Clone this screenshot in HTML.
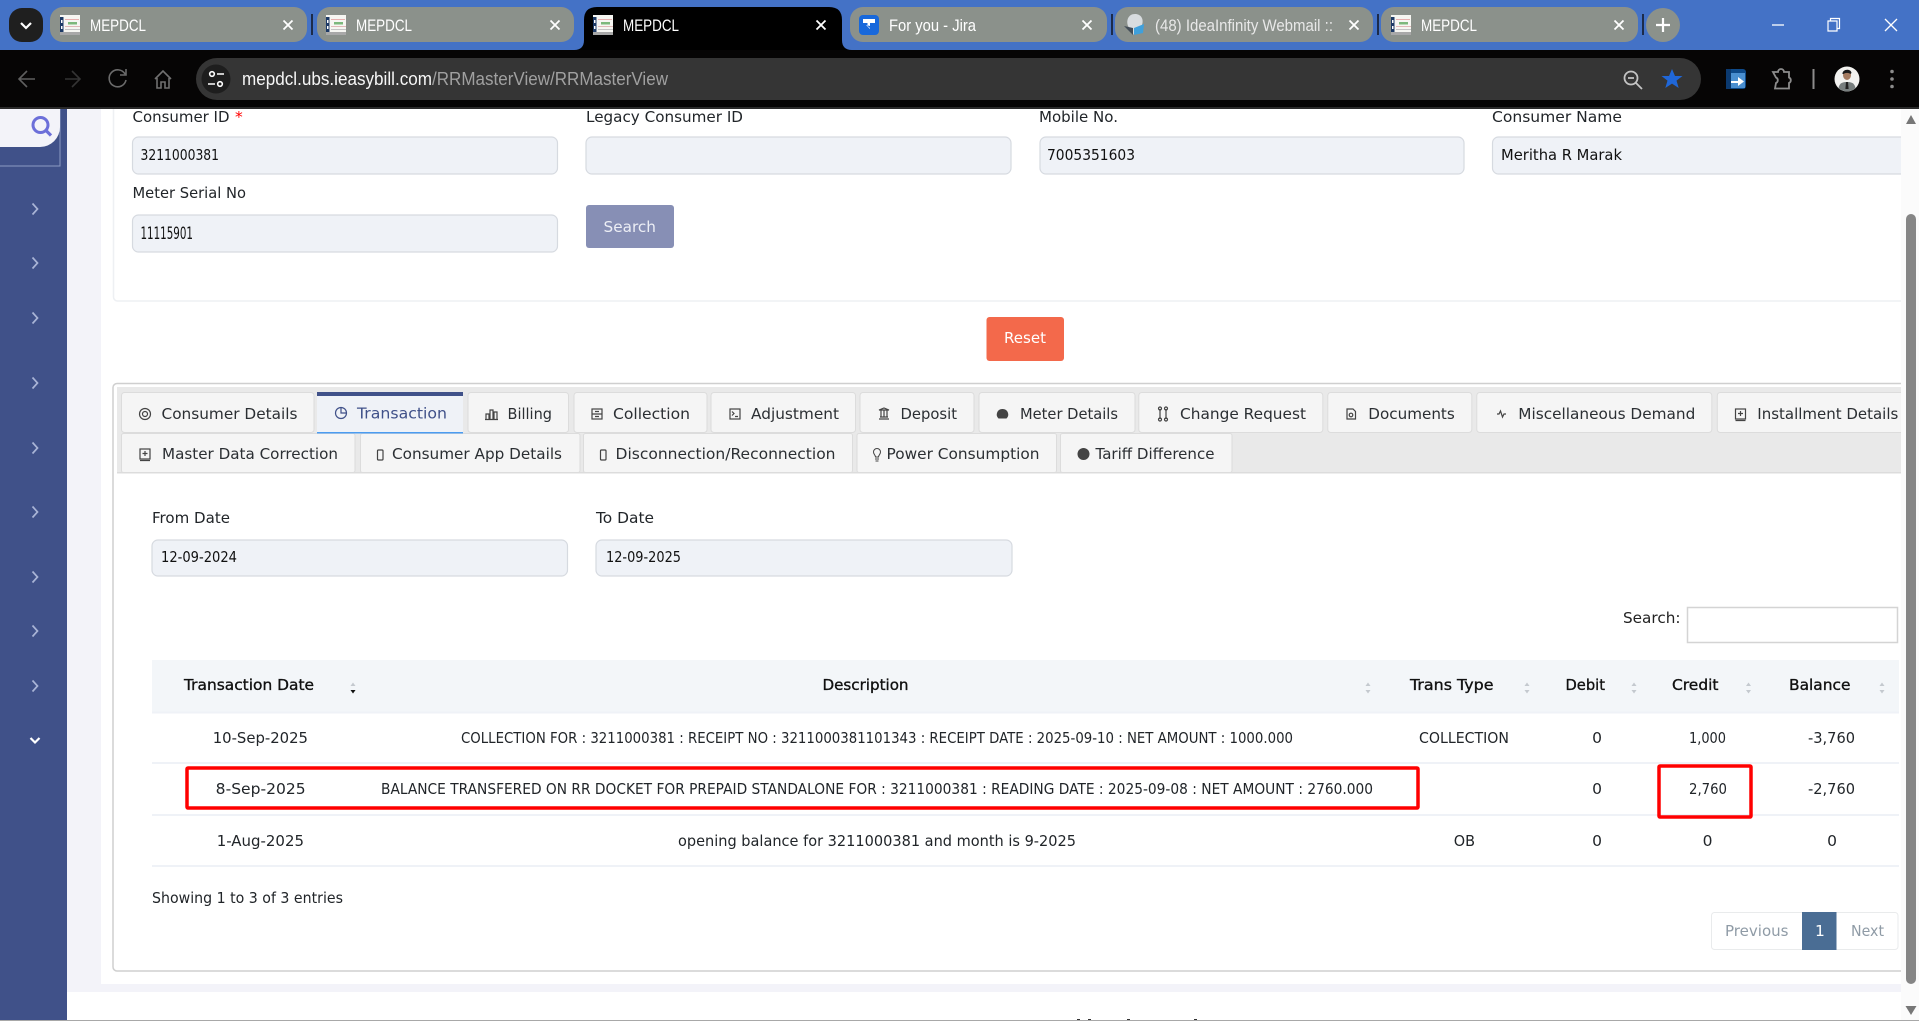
<!DOCTYPE html>
<html lang="en"><head><meta charset="utf-8"><title>MEPDCL</title>
<style>
html,body{margin:0;padding:0;background:#fff;width:1919px;height:1021px;overflow:hidden}
svg{display:block}
text{font-family:"DejaVu Sans","Liberation Sans",sans-serif;font-size:15.5px;fill:#212529}
.c text{font-family:"Liberation Sans",sans-serif;font-size:16.5px;fill:#fff}
.h text{fill:#111;font-size:15.5px;stroke:#111;stroke-width:.35px}
.tab{fill:#f5f5f5;stroke:#dcdcdc;stroke-width:1}
.tt text{fill:#2b2f33;font-size:15.5px}
.ic{fill:none;stroke:#444;stroke-width:1.2}
.lab text{fill:#212529;font-size:15.5px}
.inp{fill:#eff2f7;stroke:#d6dae0;stroke-width:1.2}
.rl{fill:#eff2f7}
</style></head><body>
<svg xmlns="http://www.w3.org/2000/svg" width="1919" height="1021" viewBox="0 0 1919 1021">
<defs>
<g id="fav"><rect width="20" height="20" fill="#f6f6f2"/><rect x="0" y="2" width="3.500" height="15" fill="#1d3a66"/><rect x="1" y="5" width="1.500" height="3" fill="#fff"/><rect x="1" y="11" width="1.500" height="3" fill="#fff"/><rect x="5" y="4" width="14" height="1" fill="#e7b0b0"/><rect x="8" y="7" width="9" height="2.500" fill="#7cb87c"/><rect x="5" y="11" width="15" height="1" fill="#e0b8b8"/><rect x="5" y="14" width="15" height="1" fill="#c4c4c4"/><rect x="0" y="17" width="20" height="3" fill="#a8a8a8"/></g>
<g id="x"><path d="M-4.500-4.500 4.500 4.500M4.500-4.500-4.500 4.500" stroke="#fff" stroke-width="1.800" fill="none"/></g>
<g id="sort"><path d="M-2.500-3 0-6.500 2.500-3z" fill="#c4c9cf"/><path d="M-2.500 1 0 4.500 2.500 1z" fill="#c4c9cf"/></g>
<g id="chev"><path d="M-2.500-5.500 2.500 0-2.500 5.500" fill="none" stroke="#a9b4d6" stroke-width="1.700"/></g>
</defs>

<!-- Browser tab strip -->
<rect width="1919" height="50" fill="#4472c6"/>
<rect y="50" width="1919" height="57" fill="#060505"/>
<rect y="107" width="1919" height="2" fill="#2a2a2a"/>
<rect x="9" y="8" width="34" height="34" rx="13" fill="#1f1f1f"/>
<path d="M21 23l5 5 5-5" fill="none" stroke="#fff" stroke-width="2.200"/>
<g fill="#8b918b">
<rect x="50" y="7" width="257" height="35" rx="13"/>
<rect x="317" y="7" width="257" height="35" rx="13"/>
<rect x="850" y="7" width="257" height="35" rx="13"/>
<rect x="1115" y="7" width="258" height="35" rx="13"/>
<rect x="1381" y="7" width="257" height="35" rx="13"/>
<circle cx="1663" cy="25" r="17"/>
</g>
<path d="M574 50q10 0 10-10V20q0-13 13-13h232q13 0 13 13v20q0 10 10 10z" fill="#000"/>
<g fill="#1c2b4a"><rect x="311" y="14" width="2" height="21"/><rect x="1111" y="14" width="2" height="21"/><rect x="1377" y="14" width="2" height="21"/><rect x="1642" y="14" width="2" height="21"/></g>
<use href="#fav" x="60" y="15"/><use href="#fav" x="326" y="15"/><use href="#fav" x="593" y="15"/><use href="#fav" x="1391" y="15"/>
<rect x="859" y="15" width="20" height="20" rx="4" fill="#1868db"/>
<path d="M863 19h12v4h-5v5l-2.500-2v-3H863z M866 25l4 4v-3z" fill="#fff"/>
<path d="M1135 14c-7 0-9 7-7 12l6 9 8-10c2-6-1-11-7-11z" fill="#d8dcdf"/>
<path d="M1124 26l9 9v-7z" fill="#444e58"/><path d="M1144 24l-10 4v7l9-2z" fill="#3fa0dc"/>
<g class="c">
<text x="90" y="31" textLength="56" lengthAdjust="spacingAndGlyphs">MEPDCL</text>
<text x="356" y="31" textLength="56" lengthAdjust="spacingAndGlyphs">MEPDCL</text>
<text x="623" y="31" textLength="56" lengthAdjust="spacingAndGlyphs">MEPDCL</text>
<text x="889" y="31" textLength="87" lengthAdjust="spacingAndGlyphs">For you - Jira</text>
<text x="1155" y="31" textLength="178" lengthAdjust="spacingAndGlyphs" style="fill:#e8e8e8">(48) IdeaInfinity Webmail ::</text>
<text x="1421" y="31" textLength="56" lengthAdjust="spacingAndGlyphs">MEPDCL</text>
</g>
<use href="#x" x="288" y="25"/><use href="#x" x="555" y="25"/><use href="#x" x="821" y="25"/><use href="#x" x="1087" y="25"/><use href="#x" x="1354" y="25"/><use href="#x" x="1619" y="25"/>
<path d="M1663 18v14M1656 25h14" stroke="#fff" stroke-width="2.200"/>
<path d="M1772 25h12" stroke="#fff" stroke-width="1.300"/>
<path d="M1828 21h9v10h-9zM1830.500 21v-2.500h9v10H1837" fill="none" stroke="#fff" stroke-width="1.200"/>
<path d="M1885 19l12 12M1897 19l-12 12" stroke="#fff" stroke-width="1.300"/>

<!-- Toolbar -->
<g fill="none" stroke-width="1.600">
<path d="M35 79H20M27 71l-8 8 8 8" stroke="#5f5f5f"/>
<path d="M65 79h15M72 71l8 8-8 8" stroke="#343434"/>
<path d="M125 74a8.500 8.500 0 1 0 1 6M126 69v6h-6" stroke="#6b6b6b"/>
<path d="M155 79l8-8 8 8M157 78v10h4v-6h4v6h4V78" stroke="#707070"/>
</g>
<rect x="196" y="58" width="1505" height="42" rx="21" fill="#353535"/>
<circle cx="216" cy="79" r="14.500" fill="#1e1e1e"/>
<g fill="none" stroke="#fff" stroke-width="1.600"><circle cx="212" cy="74" r="2.300"/><path d="M217 74h7M208 84h7"/><circle cx="220" cy="84" r="2.300"/></g>
<g class="c"><text x="242" y="85" textLength="190" lengthAdjust="spacingAndGlyphs" style="font-size:18px;fill:#f6f6f6">mepdcl.ubs.ieasybill.com</text>
<text x="432" y="85" textLength="236" lengthAdjust="spacingAndGlyphs" style="font-size:18px;fill:#a0a0a0">/RRMasterView/RRMasterView</text></g>
<g fill="none" stroke="#c4c4c4" stroke-width="1.800"><circle cx="1631" cy="78" r="6.500"/><path d="M1636 83l6 6M1628 78h6"/></g>
<path d="M1672 69l3 7h7.500l-6 4.600 2.200 7.400-6.700-4.400-6.700 4.400 2.200-7.400-6-4.600h7.500z" fill="#2067d8"/>
<rect x="1726" y="69" width="20" height="20" rx="3" fill="#0e4a8a"/><rect x="1730" y="73" width="15" height="15" fill="#4a8fd0"/><path d="M1731 81h7v-4l6 4.500-6 4.500v-3h-7z" fill="#fff"/><rect x="1726" y="69" width="5" height="20" fill="#0b3a70"/>
<path d="M1773 72h5a3 3 0 0 1 6 0h5v5.500a3 3 0 0 1 0 5.500v5.500h-14l1-5.500a3 3 0 0 0 0-5.500z" fill="none" stroke="#8c8c8c" stroke-width="1.800"/>
<rect x="1812.500" y="69" width="2" height="20" fill="#8c8c8c"/>
<circle cx="1847" cy="79" r="12.500" fill="#f2f2f0"/>
<path d="M1838.500 88c1-5 4-6 8.500-6s7.500 1 8.500 6a12.500 12.500 0 0 1-17 0z" fill="#777e7e"/>
<path d="M1846 82h2l.6 7h-3.200z" fill="#222"/>
<ellipse cx="1847" cy="75" rx="4" ry="5" fill="#a57b60"/><path d="M1842.500 74c-.5-5 8.500-6 9-1l-1 1c-2-1.500-5-1.500-7 0z" fill="#1b1b1b"/>
<g fill="#8c8c8c"><circle cx="1892" cy="71.500" r="1.800"/><circle cx="1892" cy="79" r="1.800"/><circle cx="1892" cy="86.500" r="1.800"/></g>

<!-- Page background -->
<rect x="67" y="109" width="34" height="883" fill="#f3f3f9"/>
<rect x="67" y="984" width="1834" height="8" fill="#f3f3f9"/>

<!-- Sidebar -->
<rect x="0" y="109" width="67" height="912" fill="#405189"/>
<path d="M60 109v57H0" fill="none" stroke="#8d9bc2" stroke-width="1"/>
<path d="M0 109h60v18a20 20 0 0 1-20 20H0z" fill="#f3f3f9"/>
<circle cx="40.500" cy="125" r="7.500" fill="none" stroke="#6c6fd9" stroke-width="3"/><path d="M45.500 130l5.500 5.500" stroke="#6c6fd9" stroke-width="3.200"/>
<use href="#chev" x="35" y="209"/><use href="#chev" x="35" y="263"/><use href="#chev" x="35" y="318"/><use href="#chev" x="35" y="383"/><use href="#chev" x="35" y="448"/><use href="#chev" x="35" y="512"/><use href="#chev" x="35" y="577"/><use href="#chev" x="35" y="631"/><use href="#chev" x="35" y="686"/>
<path d="M30.500 738l4.500 4.500 4.500-4.500" fill="none" stroke="#fff" stroke-width="2.200"/>

<!-- Search form card -->
<path d="M113.500 109v188a4 4 0 0 0 4 4H1901" fill="none" stroke="#eef0f3" stroke-width="1.500"/>
<g class="lab">
<text x="132.500" y="122" textLength="97" lengthAdjust="spacingAndGlyphs">Consumer ID</text>
<text x="235" y="122" style="fill:#f00">*</text>
<text x="586" y="122" textLength="157" lengthAdjust="spacingAndGlyphs">Legacy Consumer ID</text>
<text x="1039" y="122" textLength="79" lengthAdjust="spacingAndGlyphs">Mobile No.</text>
<text x="1492" y="122" textLength="130" lengthAdjust="spacingAndGlyphs">Consumer Name</text>
<text x="132.500" y="198" textLength="113.500" lengthAdjust="spacingAndGlyphs">Meter Serial No</text>
<text x="152" y="523" textLength="78" lengthAdjust="spacingAndGlyphs">From Date</text>
<text x="596" y="523" textLength="58" lengthAdjust="spacingAndGlyphs">To Date</text>
</g>
<rect class="inp" x="132.500" y="137" width="425" height="37" rx="6"/>
<rect class="inp" x="586" y="137" width="425" height="37" rx="6"/>
<rect class="inp" x="1040" y="137" width="424" height="37" rx="6"/>
<rect class="inp" x="1492.500" y="137" width="430" height="37" rx="6"/>
<rect class="inp" x="132.500" y="215" width="425" height="37" rx="6"/>
<g>
<text x="140.500" y="160" textLength="78.500" lengthAdjust="spacingAndGlyphs" style="fill:#111">3211000381</text>
<text x="1047" y="160" textLength="88" lengthAdjust="spacingAndGlyphs" style="fill:#111">7005351603</text>
<text x="1501" y="160" textLength="121" lengthAdjust="spacingAndGlyphs" style="fill:#111">Meritha R Marak</text>
<text x="140.500" y="239" textLength="52.500" lengthAdjust="spacingAndGlyphs" style="fill:#111;font-size:16.5px">11115901</text>
</g>
<rect x="586" y="205" width="88" height="43" rx="3" fill="#878fb5"/>
<text x="603.500" y="232" textLength="52.500" lengthAdjust="spacingAndGlyphs" style="fill:#eceef5">Search</text>
<rect x="986.500" y="317" width="77.500" height="44" rx="3" fill="#f3694b"/>
<text x="1004" y="343" textLength="42" lengthAdjust="spacingAndGlyphs" style="fill:#fff">Reset</text>

<!-- Tabs card -->
<path d="M1901 383.500H117a4 4 0 0 0-4 4V967a4 4 0 0 0 4 4H1901" fill="none" stroke="#cfcfcf" stroke-width="1.500"/>
<rect x="117" y="387" width="1784" height="86" fill="#e9e9e9"/>
<rect x="117" y="472" width="1784" height="1.500" fill="#dcdcdc"/>
<g>
<rect class="tab" x="121.500" y="392.500" width="192.500" height="40" rx="3"/>
<rect class="tab" x="468" y="392.500" width="100.500" height="40" rx="3"/>
<rect class="tab" x="574" y="392.500" width="133" height="40" rx="3"/>
<rect class="tab" x="711" y="392.500" width="144.500" height="40" rx="3"/>
<rect class="tab" x="860" y="392.500" width="114" height="40" rx="3"/>
<rect class="tab" x="979" y="392.500" width="156" height="40" rx="3"/>
<rect class="tab" x="1138.800" y="392.500" width="184" height="40" rx="3"/>
<rect class="tab" x="1327.800" y="392.500" width="144" height="40" rx="3"/>
<rect class="tab" x="1476.800" y="392.500" width="235" height="40" rx="3"/>
<rect class="tab" x="1717.300" y="392.500" width="190" height="40" rx="3"/>
<rect class="tab" x="121.500" y="433.500" width="233.500" height="39" rx="2"/>
<rect class="tab" x="360.500" y="433.500" width="219.500" height="39" rx="2"/>
<rect class="tab" x="583.500" y="433.500" width="269" height="39" rx="2"/>
<rect class="tab" x="857" y="433.500" width="199.500" height="39" rx="2"/>
<rect class="tab" x="1060.500" y="433.500" width="171.500" height="39" rx="2"/>
</g>
<rect x="317" y="392" width="146" height="41" fill="#eff2f7"/>
<rect x="317" y="392" width="146" height="4" fill="#405189"/>
<rect x="317" y="432" width="146" height="1.500" fill="#4b9cf0"/>
<g class="tt">
<text x="161.500" y="419" textLength="136" lengthAdjust="spacingAndGlyphs">Consumer Details</text>
<text x="357" y="418.500" textLength="90" lengthAdjust="spacingAndGlyphs" style="fill:#405189">Transaction</text>
<text x="507.500" y="419" textLength="44.500" lengthAdjust="spacingAndGlyphs">Billing</text>
<text x="613" y="419" textLength="77" lengthAdjust="spacingAndGlyphs">Collection</text>
<text x="751" y="419" textLength="88" lengthAdjust="spacingAndGlyphs">Adjustment</text>
<text x="900.500" y="419" textLength="56.500" lengthAdjust="spacingAndGlyphs">Deposit</text>
<text x="1020" y="419" textLength="98" lengthAdjust="spacingAndGlyphs">Meter Details</text>
<text x="1180" y="419" textLength="126" lengthAdjust="spacingAndGlyphs">Change Request</text>
<text x="1368.300" y="419" textLength="86.500" lengthAdjust="spacingAndGlyphs">Documents</text>
<text x="1518.300" y="419" textLength="177" lengthAdjust="spacingAndGlyphs">Miscellaneous Demand</text>
<text x="1757.300" y="419" textLength="141" lengthAdjust="spacingAndGlyphs">Installment Details</text>
<text x="162" y="459" textLength="176" lengthAdjust="spacingAndGlyphs">Master Data Correction</text>
<text x="392" y="459" textLength="170" lengthAdjust="spacingAndGlyphs">Consumer App Details</text>
<text x="615.500" y="459" textLength="220" lengthAdjust="spacingAndGlyphs">Disconnection/Reconnection</text>
<text x="886.500" y="459" textLength="153" lengthAdjust="spacingAndGlyphs">Power Consumption</text>
<text x="1095.500" y="459" textLength="119" lengthAdjust="spacingAndGlyphs">Tariff Difference</text>
</g>
<!-- Tab icons -->
<g class="ic">
<circle cx="145" cy="414" r="5.500"/><circle cx="145" cy="414" r="2.500"/>
<circle cx="341" cy="413" r="5.500" style="stroke:#405189"/><path d="M341 407.500v5.500h5.500" style="stroke:#405189"/>
<path d="M486 419v-5h3v5M490 419v-9h3v9M494 419v-7h3v7M485 419.500h13"/>
<rect x="592" y="409" width="10" height="10"/><path d="M592 414h10M595 411.500h4M595 416.500h4"/>
<rect x="730" y="409" width="10" height="10"/><path d="M732 411.500l2 2-2 2M735 416.500h3"/>
<path d="M879 419h10M880 417h8M881 410v7M884 410v7M887 410v7M879 410l5-2 5 2z"/>
<path d="M1160 409v10M1166 409v10"/><circle cx="1160" cy="408.500" r="1.500"/><circle cx="1160" cy="419.500" r="1.500"/><circle cx="1166" cy="408.500" r="1.500"/><circle cx="1166" cy="419.500" r="1.500"/>
<path d="M1347 409h6l2.500 2.500V419h-8.500z"/><circle cx="1351" cy="415" r="1.800"/>
<path d="M1497 414h2l1.500-3 2 6 1.500-3h2"/>
<rect x="1735.500" y="409" width="10" height="10"/><path d="M1735.500 420.500h10M1740.500 411v5M1738 413.500h5"/>
<rect x="140" y="449" width="10" height="10"/><path d="M140 460.500h10M145 451v5M142.500 453.500h5"/>
<rect x="377.500" y="450" width="5.500" height="10" rx="1"/>
<rect x="600.500" y="450" width="5.500" height="10" rx="1"/>
<path d="M875 459h4M875.500 461h3M875.500 457c0-2-2-2.500-2-5a3.500 3.500 0 0 1 7 0c0 2.500-2 3-2 5z" stroke-width="1"/>
</g>
<path d="M1002.500 409a5.500 5.500 0 0 1 4 9.500h-8a5.500 5.500 0 0 1 4-9.500z" fill="#444"/>
<circle cx="1083.500" cy="454" r="6" fill="#444"/>

<!-- Date filters -->
<rect class="inp" x="152" y="540" width="415.500" height="36" rx="6"/>
<rect class="inp" x="596" y="540" width="416" height="36" rx="6"/>
<text x="161" y="562" textLength="76" lengthAdjust="spacingAndGlyphs" style="fill:#111">12-09-2024</text>
<text x="606" y="562" textLength="75" lengthAdjust="spacingAndGlyphs" style="fill:#111">12-09-2025</text>

<!-- Table search -->
<text x="1623" y="623" textLength="57.500" lengthAdjust="spacingAndGlyphs" style="fill:#222">Search:</text>
<rect x="1687.500" y="607.500" width="210" height="35" fill="#fff" stroke="#d4d4d4" stroke-width="1.500"/>

<!-- Table -->
<rect x="152" y="660" width="1747" height="51.500" fill="#f3f6f9"/>
<rect class="rl" x="152" y="711.500" width="1747" height="2"/>
<rect class="rl" x="152" y="762" width="1747" height="2"/>
<rect class="rl" x="152" y="814" width="1747" height="2"/>
<rect class="rl" x="152" y="865" width="1747" height="2"/>
<g class="h">
<text x="184" y="690" textLength="130" lengthAdjust="spacingAndGlyphs">Transaction Date</text>
<text x="822.500" y="690" textLength="86" lengthAdjust="spacingAndGlyphs">Description</text>
<text x="1410" y="690" textLength="83.500" lengthAdjust="spacingAndGlyphs">Trans Type</text>
<text x="1565.500" y="690" textLength="39.500" lengthAdjust="spacingAndGlyphs">Debit</text>
<text x="1672" y="690" textLength="46.500" lengthAdjust="spacingAndGlyphs">Credit</text>
<text x="1789" y="690" textLength="61.500" lengthAdjust="spacingAndGlyphs">Balance</text>
</g>
<use href="#sort" x="353" y="689"/><path d="M350.500 690 353 693.500 355.500 690z" fill="#111"/>
<use href="#sort" x="1368" y="689"/><use href="#sort" x="1527" y="689"/><use href="#sort" x="1634" y="689"/><use href="#sort" x="1748.500" y="689"/><use href="#sort" x="1882" y="689"/>
<g>
<text x="212.700" y="743" textLength="95.300" lengthAdjust="spacingAndGlyphs">10-Sep-2025</text>
<text x="461" y="743" textLength="832" lengthAdjust="spacingAndGlyphs">COLLECTION FOR : 3211000381 : RECEIPT NO : 3211000381101343 : RECEIPT DATE : 2025-09-10 : NET AMOUNT : 1000.000</text>
<text x="1419" y="743" textLength="90" lengthAdjust="spacingAndGlyphs">COLLECTION</text>
<text x="1597" y="743" text-anchor="middle">0</text>
<text x="1689" y="743" textLength="37" lengthAdjust="spacingAndGlyphs">1,000</text>
<text x="1808" y="743" textLength="47" lengthAdjust="spacingAndGlyphs">-3,760</text>
<text x="215.700" y="794" textLength="90" lengthAdjust="spacingAndGlyphs">8-Sep-2025</text>
<text x="381" y="794" textLength="992" lengthAdjust="spacingAndGlyphs">BALANCE TRANSFERED ON RR DOCKET FOR PREPAID STANDALONE FOR : 3211000381 : READING DATE : 2025-09-08 : NET AMOUNT : 2760.000</text>
<text x="1597" y="794" text-anchor="middle">0</text>
<text x="1689" y="794" textLength="38" lengthAdjust="spacingAndGlyphs">2,760</text>
<text x="1808" y="794" textLength="47" lengthAdjust="spacingAndGlyphs">-2,760</text>
<text x="216.700" y="846" textLength="87.300" lengthAdjust="spacingAndGlyphs">1-Aug-2025</text>
<text x="678" y="846" textLength="398" lengthAdjust="spacingAndGlyphs">opening balance for 3211000381 and month is 9-2025</text>
<text x="1453.700" y="846" textLength="21.300" lengthAdjust="spacingAndGlyphs">OB</text>
<text x="1597" y="846" text-anchor="middle">0</text>
<text x="1707.500" y="846" text-anchor="middle">0</text>
<text x="1832" y="846" text-anchor="middle">0</text>
<text x="152" y="903" textLength="191" lengthAdjust="spacingAndGlyphs">Showing 1 to 3 of 3 entries</text>
</g>
<!-- Annotation boxes -->
<rect x="187" y="768" width="1231" height="40" rx="1" fill="none" stroke="#f00" stroke-width="3.500"/>
<rect x="1659" y="766" width="92" height="51" rx="1" fill="none" stroke="#f00" stroke-width="3.500"/>

<!-- Pagination -->
<rect x="1711.500" y="912.500" width="186.500" height="37" rx="3" fill="#fff" stroke="#e9ebec"/>
<rect x="1802" y="912" width="34.500" height="38" fill="#4a6d94"/>
<text x="1725" y="936" textLength="63.500" lengthAdjust="spacingAndGlyphs" style="fill:#8f9ba6">Previous</text>
<text x="1815" y="936" style="fill:#fff">1</text>
<text x="1851" y="936" textLength="33" lengthAdjust="spacingAndGlyphs" style="fill:#8f9ba6">Next</text>

<!-- Scrollbar -->
<rect x="1901" y="109" width="18" height="912" fill="#fbfbfb"/>
<path d="M1911 115l5 9h-10z" fill="#777"/>
<rect x="1906" y="214" width="10" height="770" rx="5" fill="#868686"/>
<path d="M1911 1015l-5.500-9h11z" fill="#777"/>

<!-- Bottom clip -->
<g fill="#333"><rect x="1077" y="1019" width="3" height="1"/><rect x="1088" y="1019" width="3" height="1"/><rect x="1127" y="1019" width="3" height="1"/><rect x="1194" y="1019" width="3" height="1"/></g>
<rect y="1020" width="1919" height="1" fill="#a8a8a8"/>
</svg>
</body></html>
